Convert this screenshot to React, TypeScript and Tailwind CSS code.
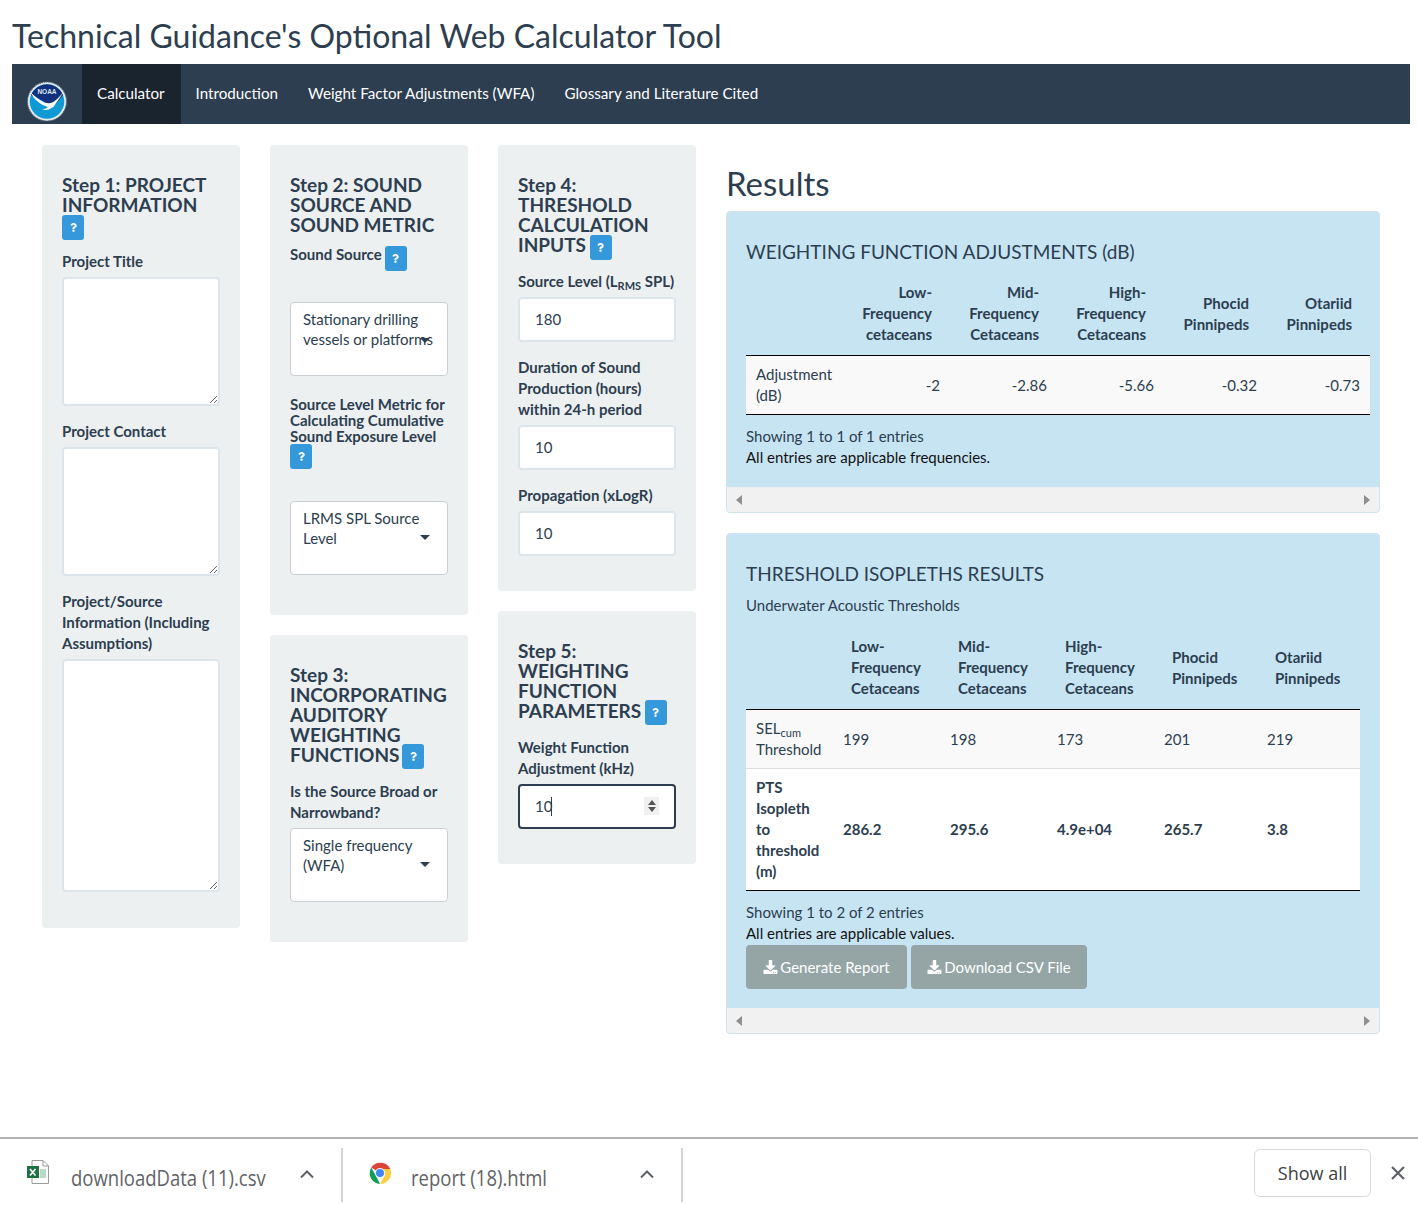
import React from 'react';
import { FaDownload, FaQuestion } from 'react-icons/fa';

const NAV_ITEMS = ['Introduction', 'Weight Factor Adjustments (WFA)', 'Glossary and Literature Cited'];
const SPECIES = [
  ['Low-', 'Frequency', 'cetaceans'],
  ['Mid-', 'Frequency', 'Cetaceans'],
  ['High-', 'Frequency', 'Cetaceans'],
  ['Phocid', 'Pinnipeds'],
  ['Otariid', 'Pinnipeds'],
];
const SPECIES_2 = [
  ['Low-', 'Frequency', 'Cetaceans'],
  ['Mid-', 'Frequency', 'Cetaceans'],
  ['High-', 'Frequency', 'Cetaceans'],
  ['Phocid', 'Pinnipeds'],
  ['Otariid', 'Pinnipeds'],
];

const HelpButton: React.FC<{ className?: string }> = ({ className = '' }) => (
  <span className={`inline-flex h-[25px] w-[22px] items-center justify-center rounded-[3px] bg-[#3498db] align-top text-white ${className}`}>
    <FaQuestion className="h-[9px] w-[9px]" />
  </span>
);

const Panel: React.FC<{ className?: string; children: React.ReactNode }> = ({ className = '', children }) => (
  <div className={`rounded-[4px] bg-[#ecf0f1] px-5 ${className}`}>{children}</div>
);

const Heading: React.FC<{ children: React.ReactNode }> = ({ children }) => (
  <h4 className="text-[19px] leading-[20px] font-bold">{children}</h4>
);

const Label: React.FC<{ className?: string; children: React.ReactNode }> = ({ className = '', children }) => (
  <div className={`text-[15px] leading-[21px] font-bold ${className}`}>{children}</div>
);

const SelectBox: React.FC<{ lines: string[]; caretClass: string; className?: string }> = ({ lines, caretClass, className = '' }) => (
  <div className={`relative h-[74px] rounded-[4px] border border-[#c9cfd3] bg-white px-3 py-[6px] text-[15px] leading-[20px] ${className}`}>
    {lines.map(l => (
      <div key={l} className="whitespace-nowrap">{l}</div>
    ))}
    <span className={`absolute right-[17px] h-0 w-0 border-x-[5px] border-t-[5px] border-x-transparent border-t-[#2c3e50] ${caretClass}`}></span>
  </div>
);

const TextInput: React.FC<{ value: string; focused?: boolean; className?: string }> = ({ value, focused = false, className = '' }) => (
  <div className={`flex h-[45px] items-center rounded-[4px] border-2 bg-white px-[15px] text-[15px] ${focused ? 'border-[#2c3e50]' : 'border-[#dce4ec]'} ${className}`}>{value}</div>
);

const TextArea: React.FC<{ className: string }> = ({ className }) => (
  <textarea className={`block w-[158px] rounded-[4px] border-2 border-[#dce4ec] bg-white ${className}`} />
);

const ScrollStrip: React.FC = () => (
  <div className="flex h-[25px] items-center justify-between bg-[#f1f1f1] px-[9px]">
    <span className="h-0 w-0 border-y-[5px] border-r-[6px] border-y-transparent border-r-[#8f8f8f]"></span>
    <span className="h-0 w-0 border-y-[5px] border-l-[6px] border-y-transparent border-l-[#8f8f8f]"></span>
  </div>
);

const NoaaLogo: React.FC = () => (
  <svg viewBox="0 0 40 41" className="h-[41px] w-[40px]">
    <circle cx="20" cy="20.5" r="19.5" fill="#e6ebee" stroke="#56677a" strokeWidth="1.200" strokeDasharray="1.2 0.8" />
    <circle cx="20" cy="20.5" r="17.300" fill="#0f9ad6" />
    <path d="M4 14a17.300 17.300 0 0 1 32 0c-3 4-6 8-9 10.500-3 .8-6-1-8-2.500-3-2-9-5.500-15-8z" fill="#12307c" />
    <path d="M3.500 11c4 4.500 9 8 14 10.500 3 1.500 5 4 8.500 4.500-3 2.500-7 3.500-11 2.500 3-.5 5-1.500 6-2.500C14 24 7 19 3.500 11z" fill="#fff" />
    <path d="M36.500 11c-3 5-6 9-10 15-3 .5-6-2-8.500-4.500 8 3 13-4.500 18.500-10.500z" fill="#fff" />
    <text x="20" y="13" textAnchor="middle" fontSize="6.500" fontWeight="700" fill="#dfe8f5" fontFamily="Liberation Sans, sans-serif">NOAA</text>
  </svg>
);

const ExcelIcon: React.FC = () => (
  <svg viewBox="0 0 22 24" className="h-[24px] w-[22px]">
    <path d="M5 .5h11l5.500 5.500v17.500H5z" fill="#fff" stroke="#9a9a9a" />
    <path d="M16 .5V6h5.500" fill="none" stroke="#9a9a9a" />
    <rect x="13" y="9" width="6" height="9" fill="#b5dbc4" />
    <rect x="0" y="6" width="12" height="12" fill="#1e7145" />
    <path d="M3 9l5.500 6.500M8.500 9L3 15.500" stroke="#fff" strokeWidth="1.600" />
  </svg>
);

const ChromeIcon: React.FC = () => (
  <svg viewBox="0 0 24 24" className="h-[24px] w-[24px]">
    <path d="M12 12L3.200 6.500A11 11 0 0 1 22.300 8H12z" fill="#db4437" />
    <path d="M12 23A11 11 0 0 1 3.200 6.500L8 15z" fill="#0f9d58" />
    <path d="M22.300 8A11 11 0 0 1 12 23l4.800-8.500L12 8z" fill="#ffcd40" />
    <circle cx="12" cy="12" r="5" fill="#fff" />
    <circle cx="12" cy="12" r="4" fill="#4285f4" />
  </svg>
);

const UpChevron: React.FC<{ className?: string }> = ({ className = '' }) => (
  <svg viewBox="0 0 16 10" className={`h-[10px] w-[16px] ${className}`}>
    <path d="M2 8.500L8 2.500l6 6" fill="none" stroke="#5f6368" strokeWidth="2" />
  </svg>
);

const ResultButton: React.FC<{ children: React.ReactNode; className: string }> = ({ children, className }) => (
  <button className={`flex h-[44px] items-center justify-center rounded-[4px] bg-[#95a5a6] text-[15px] text-white ${className}`}>
    <FaDownload className="mr-[2px] h-[14px] w-[15px]" />
    {children}
  </button>
);

export default function App() {
  return (
    <div className="flex h-[1205px] flex-col justify-between overflow-hidden bg-white font-['Lato',sans-serif] text-[#2c3e50]">
      <div>
        <div className="px-3">
          <h1 className="h-[64px] pt-[16px] text-[32px] leading-[40px] font-normal">Technical Guidance's Optional Web Calculator Tool</h1>

          {/* Navigation */}
          <nav className="flex h-[60px] w-[1398px] bg-[#2c3e50] pb-[2px] text-[15.2px] text-white">
            <div className="flex w-[70px] items-end justify-center">
              <NoaaLogo />
            </div>
            <div className="-mb-[2px] flex items-center bg-[#1a242f] pr-[16px] pb-[2px] pl-[15px]">Calculator</div>
            {NAV_ITEMS.map(item => (
              <div key={item} className="flex items-center px-[15px]">{item}</div>
            ))}
          </nav>
        </div>

        <div className="mt-[21px] flex gap-[30px] pl-[42px]">
          {/* Step 1 */}
          <div className="w-[198px]">
            <Panel className="h-[783px] pt-[30px]">
              <Heading>Step 1: PROJECT INFORMATION</Heading>
              <HelpButton className="block" />
              <Label className="mt-[11px]">Project Title</Label>
              <TextArea className="mt-[5px] h-[129px]" />
              <Label className="mt-[15px]">Project Contact</Label>
              <TextArea className="mt-[5px] h-[129px]" />
              <Label className="mt-[15px]">Project/Source Information (Including Assumptions)</Label>
              <TextArea className="mt-[5px] h-[233px]" />
            </Panel>
          </div>

          {/* Step 2 and 3 */}
          <div className="flex w-[198px] flex-col gap-5">
            <Panel className="h-[470px] pt-[30px]">
              <Heading>Step 2: SOUND SOURCE AND SOUND METRIC</Heading>
              <div className="mt-[11px] flex items-start gap-[3px]">
                <Label className="mt-[-2px]">Sound Source</Label>
                <HelpButton />
              </div>
              <SelectBox lines={['Stationary drilling', 'vessels or platforms']} caretClass="top-[35px]" className="mt-[31px]" />
              <div className="mt-[20px] text-[15px] leading-[16px] font-bold whitespace-nowrap">
                Source Level Metric for
                <br />
                Calculating Cumulative
                <br />
                Sound Exposure Level
              </div>
              <HelpButton className="block" />
              <SelectBox lines={['LRMS SPL Source', 'Level']} caretClass="top-[33px]" className="mt-[32px]" />
            </Panel>

            <Panel className="h-[307px] pt-[30px]">
              <Heading>
                Step 3: INCORPORATING AUDITORY WEIGHTING FUNCTIONS <HelpButton className="mt-[-1px] -ml-[2px]" />
              </Heading>
              <Label className="mt-[12px]">Is the Source Broad or Narrowband?</Label>
              <SelectBox lines={['Single frequency', '(WFA)']} caretClass="top-[33px]" className="mt-[5px]" />
            </Panel>
          </div>

          {/* Step 4 and 5 */}
          <div className="flex w-[198px] flex-col gap-5">
            <Panel className="h-[446px] pt-[30px]">
              <Heading>
                Step 4: THRESHOLD CALCULATION INPUTS <HelpButton className="-ml-[1px]" />
              </Heading>
              <Label className="mt-[11px] whitespace-nowrap">
                Source Level (L<sub className="text-[11px] font-bold">RMS</sub> SPL)
              </Label>
              <TextInput value="180" className="mt-[5px]" />
              <Label className="mt-[15px]">Duration of Sound Production (hours) within 24-h period</Label>
              <TextInput value="10" className="mt-[5px]" />
              <Label className="mt-[15px]">Propagation (xLogR)</Label>
              <TextInput value="10" className="mt-[5px]" />
            </Panel>

            <Panel className="h-[253px] pt-[30px]">
              <Heading>
                Step 5: WEIGHTING FUNCTION PARAMETERS <HelpButton className="mt-[-1px] -ml-[1px]" />
              </Heading>
              <Label className="mt-[12px]">Weight Function Adjustment (kHz)</Label>
              <div className="relative mt-[5px]">
                <TextInput value="10" focused />
                <span className="absolute top-[13px] left-[33px] h-[19px] w-px bg-[#2c3e50]"></span>
                <span className="absolute top-[13px] right-[17px] flex h-[18px] w-[15px] flex-col items-center justify-center gap-[2px] bg-[#f0f0f0]">
                  <span className="h-0 w-0 border-x-[4px] border-b-[5px] border-x-transparent border-b-[#555]"></span>
                  <span className="h-0 w-0 border-x-[4px] border-t-[5px] border-x-transparent border-t-[#555]"></span>
                </span>
              </div>
            </Panel>
          </div>

          {/* Results */}
          <div className="w-[654px]">
            <h2 className="mt-[18px] h-[48px] text-[33px] leading-[40px] font-normal">Results</h2>

            <div className="overflow-hidden rounded-[4px] border border-[#d3e3ec] bg-[#c7e4f3]">
              <div className="px-[19px] pt-[29px]">
                <h4 className="text-[19px] leading-[22px] font-normal">WEIGHTING FUNCTION ADJUSTMENTS (dB)</h4>
                <table className="mt-[9px] w-[624px] table-fixed border-collapse text-[15px] leading-[21px]">
                  <colgroup>
                    <col className="w-[97px]" />
                    <col className="w-[107px]" />
                    <col className="w-[107px]" />
                    <col className="w-[107px]" />
                    <col className="w-[103px]" />
                    <col className="w-[103px]" />
                  </colgroup>
                  <thead>
                    <tr className="border-b border-black">
                      <th className="pt-[10px] pb-[10px]"></th>
                      {SPECIES.map(s => (
                        <th key={s.join()} className="pt-[10px] pr-[18px] pb-[10px] pl-[10px] text-right font-bold">
                          {s.map(l => (
                            <div key={l}>{l}</div>
                          ))}
                        </th>
                      ))}
                    </tr>
                  </thead>
                  <tbody>
                    <tr className="border-b border-black bg-[#f9f9f9]">
                      <td className="px-[10px] py-2">Adjustment (dB)</td>
                      {['-2', '-2.86', '-5.66', '-0.32', '-0.73'].map(v => (
                        <td key={v} className="px-[10px] py-2 text-right">{v}</td>
                      ))}
                    </tr>
                  </tbody>
                </table>
                <div className="mt-[11px] text-[15px] leading-[21px]">Showing 1 to 1 of 1 entries</div>
                <div className="mb-[19px] text-[15px] leading-[21px] text-[#111]">All entries are applicable frequencies.</div>
              </div>
              <ScrollStrip />
            </div>

            <div className="mt-5 overflow-hidden rounded-[4px] border border-[#d3e3ec] bg-[#c7e4f3]">
              <div className="px-[19px] pt-[29px]">
                <h4 className="text-[19px] leading-[22px] font-normal">THRESHOLD ISOPLETHS RESULTS</h4>
                <div className="mt-[10px] text-[15px] leading-[21px]">Underwater Acoustic Thresholds</div>
                <table className="mt-[10px] w-[614px] table-fixed border-collapse text-[15px] leading-[21px]">
                  <colgroup>
                    <col className="w-[87px]" />
                    <col className="w-[107px]" />
                    <col className="w-[107px]" />
                    <col className="w-[107px]" />
                    <col className="w-[103px]" />
                    <col className="w-[103px]" />
                  </colgroup>
                  <thead>
                    <tr className="border-b border-black">
                      <th className="pt-[10px] pb-[10px]"></th>
                      {SPECIES_2.map(s => (
                        <th key={s.join()} className="pt-[10px] pr-[10px] pb-[10px] pl-[18px] text-left font-bold">
                          {s.map(l => (
                            <div key={l}>{l}</div>
                          ))}
                        </th>
                      ))}
                    </tr>
                  </thead>
                  <tbody>
                    <tr className="border-b border-[#ddd] bg-[#f9f9f9]">
                      <td className="px-[10px] py-2">
                        SEL<sub className="text-[11px]">cum</sub> Threshold
                      </td>
                      {['199', '198', '173', '201', '219'].map(v => (
                        <td key={v} className="px-[10px] py-2">{v}</td>
                      ))}
                    </tr>
                    <tr className="border-b border-black bg-white font-bold">
                      <td className="px-[10px] py-2">PTS Isopleth to threshold (m)</td>
                      {['286.2', '295.6', '4.9e+04', '265.7', '3.8'].map(v => (
                        <td key={v} className="px-[10px] py-2">{v}</td>
                      ))}
                    </tr>
                  </tbody>
                </table>
                <div className="mt-[11px] text-[15px] leading-[21px]">Showing 1 to 2 of 2 entries</div>
                <div className="text-[15px] leading-[21px] text-[#111]">All entries are applicable values.</div>
                <div className="mt-[1px] mb-[19px] flex gap-[4px]">
                  <ResultButton className="w-[161px]">Generate Report</ResultButton>
                  <ResultButton className="w-[176px]">Download CSV File</ResultButton>
                </div>
              </div>
              <ScrollStrip />
            </div>
          </div>
        </div>
      </div>

      {/* Browser download shelf */}
      <div className="flex h-[68px] items-center border-t-2 border-[#b3b3b3] bg-white font-['Open_Sans',sans-serif] text-[#5f6368]">
        <div className="mt-[6px] flex h-[54px] w-[343px] items-center border-r-2 border-[#d4d4d4] pl-[27px]">
          <span className="mb-[6px]"><ExcelIcon /></span>
          <span className="mt-[6px] ml-[22px] scale-y-[1.15] text-[18.5px]">downloadData (11).csv</span>
          <UpChevron className="mr-[26px] mb-[2px] ml-auto" />
        </div>
        <div className="mt-[6px] flex h-[54px] w-[340px] items-center border-r-2 border-[#d4d4d4] pl-[25px]">
          <span className="mb-[4px]"><ChromeIcon /></span>
          <span className="mt-[6px] ml-[19px] scale-y-[1.15] text-[18.5px]">report (18).html</span>
          <UpChevron className="mr-[26px] mb-[2px] ml-auto" />
        </div>
        <button className="mt-[2px] ml-auto flex h-[48px] w-[117px] items-center justify-center rounded-[6px] border border-[#dadada] text-[18px] text-[#3c4043]">Show all</button>
        <svg viewBox="0 0 14 14" className="mt-[2px] mr-[13px] ml-[20px] h-[14px] w-[14px]">
          <path d="M1 1l12 12M13 1L1 13" stroke="#5f6368" strokeWidth="2.200" />
        </svg>
      </div>
    </div>
  );
}
